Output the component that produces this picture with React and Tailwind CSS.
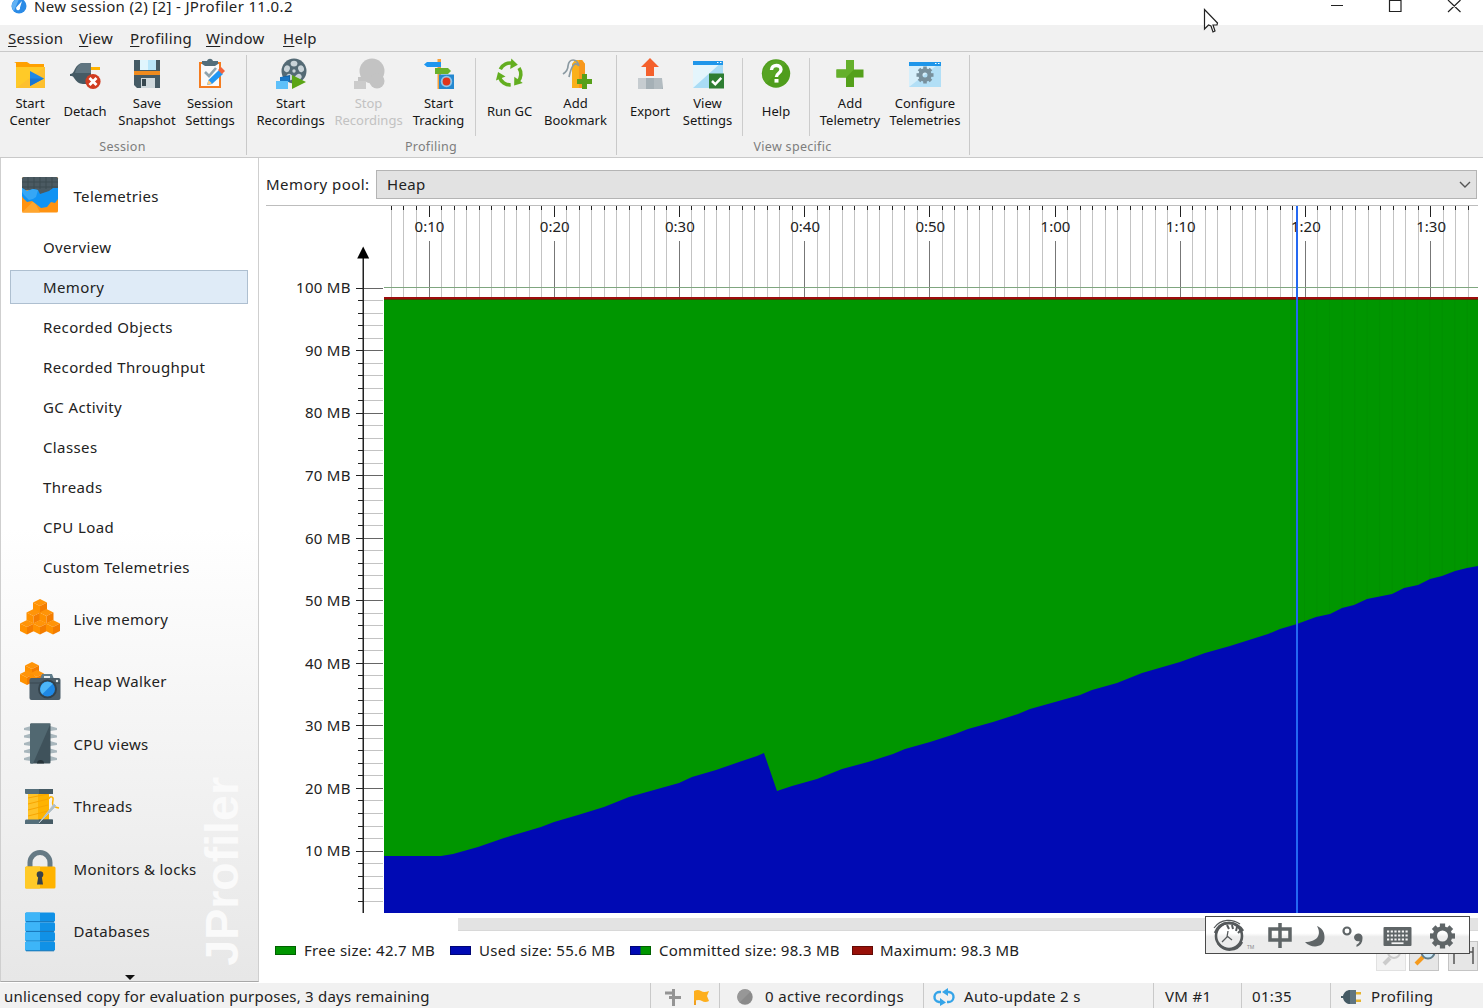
import React from "react";

/* ---------- small helpers ---------- */

function Gear({ cx, cy, r, teeth = 8, hole, fill }) {
  const w = r * 0.42;
  return (
    <g fill={fill}>
      {Array.from({ length: teeth }, (_, i) => (
        <rect
          key={i}
          x={cx - w / 2}
          y={cy - r}
          width={w}
          height={r * 0.5}
          transform={`rotate(${(i * 360) / teeth} ${cx} ${cy})`}
        />
      ))}
      <circle cx={cx} cy={cy} r={(r * 0.78 + hole) / 2} fill="none" stroke={fill} strokeWidth={r * 0.78 - hole} />
    </g>
  );
}

function Reel({ gray }) {
  const a = gray ? "#c3c3c3" : "#546a75";
  return (
    <g>
      <circle cx="19" cy="13" r="12.5" fill={a} />
      {gray ? null : (
        <g fill="#c9d3d8">
          {[0, 72, 144, 216, 288].map((d) => (
            <ellipse key={d} cx="19" cy="5.6" rx="3.4" ry="2.9" transform={`rotate(${d} 19 13)`} />
          ))}
          <circle cx="19" cy="13" r="1.7" />
        </g>
      )}
      {gray ? (
        <g fill="#c3c3c3">
          <path d="M5 19h8v4H5z" />
          <path d="M1 23h12v8H1z" fill="#cbcbcb" />
          <circle cx="24" cy="23" r="7.5" />
        </g>
      ) : (
        <g>
          <path d="M6 19l9 5v-7z" fill="#1565a9" />
          <path d="M5 19h9v5H5z" fill="#1976c4" />
          <path d="M1 23h12v8H1z" fill="#5ec0fa" />
          <path d="M17 17v14l14-7z" fill="#5ba516" />
        </g>
      )}
    </g>
  );
}

/* ---------- toolbar icons, 32 x 32 ---------- */

const icons = {
  folder: (
    <>
      <path d="M0 4h13l3 2h14v6H2V5z" fill="#ffa000" />
      <path d="M2 9h29v21H2z" fill="#ffca28" />
      <path d="M2 30L31 9v21z" fill="#fdc02f" />
      <path d="M16 13v15l14-7.5z" fill="#1e88e5" />
      <path d="M16 28v-7.5h14z" fill="#1976d2" />
    </>
  ),
  detach: (
    <>
      <path d="M1 16c2 0 3-1 4-3 2-5 5-8 9-8h8v21h-8c-4 0-7-3-9-6-1-2-2-2-4-2z" fill="#455a64" />
      <path d="M14 5h8v10H6c1-5 4-10 8-10z" fill="#607580" />
      <path d="M22 9h9v3h-9z" fill="#ffb300" />
      <circle cx="24" cy="23.5" r="7.6" fill="#d13c20" />
      <path d="M20.5 20l7 7m0-7l-7 7" stroke="#fff" strokeWidth="2.8" />
    </>
  ),
  save: (
    <>
      <path d="M3 2h26v28H6l-3-3z" fill="#455a64" />
      <path d="M9 2h16v10H9z" fill="#b9e6fa" />
      <path d="M9 2h8v10H9z" fill="#e0f5fd" />
      <path d="M3 13h26v4H3z" fill="#ef8b1f" />
      <path d="M10 20h14v10H10z" fill="#cfd8dc" />
      <path d="M11 21h4v7h-4z" fill="#37474f" />
    </>
  ),
  clipboard: (
    <>
      <path d="M5 4h22v26H5z" fill="#f47c20" />
      <path d="M7 6h18v22H7z" fill="#fafafa" />
      <path d="M8 6V3h5c1-3 5-3 6 0h5v3l-3 2H11z" fill="#546e7a" />
      <path d="M11 14l4 4 7-8" fill="none" stroke="#90a4ae" strokeWidth="2.6" />
      <path d="M13 27l1.500-5L25 12l4 4-11 10z" fill="#2196f3" />
      <path d="M24 12l3-3 4 4-3 3z" fill="#f4623a" />
      <path d="M13 27l1.500-5 3.500 3.500z" fill="#ffcc80" />
    </>
  ),
  reel: <Reel />,
  reelGray: <Reel gray />,
  tracking: (
    <>
      <path d="M14.500 1h3.500v30h-3.500z" fill="#f6a13a" />
      <path d="M1 6.500L4 4h14v5H4z" fill="#1e96f0" />
      <path d="M12 10h13l3 3-3 3H12z" fill="#6ab12b" />
      <path d="M16 16.500h15v14.500H16z" fill="#2488d0" />
      <circle cx="23.500" cy="23.500" r="5.700" fill="#8fc6ea" />
      <circle cx="23.500" cy="23.500" r="3.900" fill="#e0341b" />
    </>
  ),
  gc: (
    <g fill="none" stroke="#63ae20" strokeWidth="3.600">
      {[0, 120, 240].map((d) => (
        <g key={d} transform={`rotate(${d} 16 16)`}>
          <path d="M6.300 11.200A11 11 0 0 1 18.500 5.300" />
          <path d="M17.300 0.500l6.500 6.200-7.600 4.200z" fill="#63ae20" stroke="none" />
        </g>
      ))}
    </g>
  ),
  bookmark: (
    <>
      <path d="M12 6l3-4h7l3 4v24H12z" fill="#fbb01b" />
      <path d="M19 2h3l3 4v24h-6z" fill="#f8981d" />
      <path d="M19 8c-2-8-10-8-11 0 0 4-2 6-5 8M19 8c-5-6-8 2-10 11" fill="none" stroke="#8b9aa2" strokeWidth="1.700" />
      <path d="M22 16h5v5h5v5h-5v5h-5v-5h-5v-5h5z" fill="#56a01a" />
    </>
  ),
  exportIcon: (
    <>
      <path d="M16 0l9 9h-5v9h-8V9H7z" fill="#f4602c" />
      <path d="M4 20h24v11H4z" fill="#c6ccd0" />
      <path d="M12 20h16l1 11H12z" fill="#a5b0b6" />
      <path d="M20 20h8v11h-8z" fill="#b3bcc1" />
    </>
  ),
  viewSettings: (
    <>
      <path d="M1 3h30v27H1z" fill="#e4f5fc" />
      <path d="M31 3v27H1z" fill="#a9dcf5" />
      <path d="M1 3h30v4H1z" fill="#1e96ea" />
      <path d="M25 4.500h1.500M28 4.500h1.500" stroke="#fff" />
      <path d="M17 15.500h15v15H17z" fill="#2e7d32" />
      <path d="M20 23l3.300 3.300 6-6.500" fill="none" stroke="#fff" strokeWidth="2.500" />
    </>
  ),
  help: (
    <>
      <circle cx="16" cy="15.500" r="14.200" fill="#4f9d1c" />
      <path d="M6 25.500A14.200 14.200 0 0 1 26 5.500z" fill="#57a423" />
      <path d="M11.500 12c0-6 9.500-6 9.500-.5 0 4-4.600 3.500-4.600 7.500" fill="none" stroke="#fff" strokeWidth="3.400" />
      <path d="M14.500 21h4v3.600h-4z" fill="#fff" />
    </>
  ),
  plus: (
    <>
      <path d="M12 2h8v9.500h9.500v8H20V29h-8v-9.500H2.500v-8H12z" fill="#54a01b" />
      <path d="M12 2h8v9.500L12 19.500H2.500v-8H12z" fill="#65b02b" />
    </>
  ),
  configure: (
    <>
      <path d="M0 4h32v25H0z" fill="#d6effb" />
      <path d="M32 4v25H0z" fill="#b2dff6" />
      <path d="M0 4h32v4H0z" fill="#1e96ea" />
      <path d="M26 5.500h1.500M29 5.500h1.500" stroke="#fff" />
      <Gear cx={16} cy={17} r={8.500} hole={2.500} fill="#78909c" />
    </>
  ),
};

function Tool({ icon, lines, w, disabled }) {
  return (
    <div className={"flex h-[80px] shrink-0 flex-col items-center " + w + (disabled ? " text-[#c2c2c2]" : " text-[#161616]")}>
      <svg viewBox="0 0 32 32" className="h-[32px] w-[32px] shrink-0">
        {icons[icon]}
      </svg>
      <div className={"flex h-[48px] flex-col items-center whitespace-nowrap text-[13px] leading-[17px] " + (lines.length === 1 ? "pt-[13px]" : "pt-[5px]")}>
        {lines.map((l) => (
          <span key={l}>{l}</span>
        ))}
      </div>
    </div>
  );
}

function Group({ label, w, pad, children }) {
  return (
    <div className={"flex h-[100px] shrink-0 flex-col border-r border-[#c9c9c9] " + w}>
      <div className={"flex h-[84px] pt-[3px] " + pad}>{children}</div>
      <div className="pr-[1px] text-center text-[12.500px] leading-[16px] tracking-[0.3px] text-[#7d7d7d]">{label}</div>
    </div>
  );
}

const Sep = () => <div className="h-[78px] w-px shrink-0 bg-[#cccccc]" />;

function Toolbar() {
  return (
    <div className="flex h-[106px] shrink-0 border-b border-[#c9c9c9] bg-[#f1f1f1] pt-[3px]">
      <Group label="Session" w="w-[247px]" pad="pl-[2px]">
        <Tool icon="folder" w="w-[56px]" lines={["Start", "Center"]} />
        <Tool icon="detach" w="w-[54px]" lines={["Detach"]} />
        <Tool icon="save" w="w-[70px]" lines={["Save", "Snapshot"]} />
        <Tool icon="clipboard" w="w-[56px]" lines={["Session", "Settings"]} />
      </Group>
      <Group label="Profiling" w="w-[370px]" pad="pl-[4px]">
        <Tool icon="reel" w="w-[79px]" lines={["Start", "Recordings"]} />
        <Tool icon="reelGray" w="w-[77px]" lines={["Stop", "Recordings"]} disabled />
        <Tool icon="tracking" w="w-[63px]" lines={["Start", "Tracking"]} />
        <div className="w-[5px]" />
        <Sep />
        <Tool icon="gc" w="w-[67px]" lines={["Run GC"]} />
        <Tool icon="bookmark" w="w-[65px]" lines={["Add", "Bookmark"]} />
      </Group>
      <Group label="View specific" w="w-[353px]" pad="pl-[5px]">
        <Tool icon="exportIcon" w="w-[56px]" lines={["Export"]} />
        <Tool icon="viewSettings" w="w-[59px]" lines={["View", "Settings"]} />
        <div className="w-[5px]" />
        <Sep />
        <Tool icon="help" w="w-[66px]" lines={["Help"]} />
        <Sep />
        <Tool icon="plus" w="w-[80px]" lines={["Add", "Telemetry"]} />
        <Tool icon="configure" w="w-[70px]" lines={["Configure", "Telemetries"]} />
      </Group>
    </div>
  );
}

/* ---------- sidebar ---------- */

function Cube({ x, y }) {
  return (
    <g transform={`translate(${x} ${y})`}>
      <path d="M0 3.500L7 0l7 3.500-7 3.500z" fill="#ff9408" />
      <path d="M0 3.500l7 3.500v7.500L0 11z" fill="#ff9100" />
      <path d="M14 3.500L7 7v7.500l7-3.500z" fill="#f47d00" />
    </g>
  );
}

const sideIcons = {
  telemetries: (
    <>
      <rect x="2" y="2" width="36" height="35.500" rx="1.500" fill="#ff9312" />
      <path d="M2 37.500l12-12 6 12z" fill="#ffa62e" />
      <path d="M3.500 2h33q1.500 0 1.500 1.500V15H2V3.500Q2 2 3.500 2z" fill="#4b5a62" />
      <path d="M2 7h36M2 12h36M8 2v12M14 2v14M20 2v14M26 2v14M32 2v14" stroke="#3d4a51" strokeWidth="1" />
      <path d="M12 14h18v5H12z" fill="#4b5a62" />
      <path d="M2 13l5 3 6-2 5 1 2 4 6-2 3-1 4-3h5v11l-3 4-4-1-4 5-6 1-5-4-4-3-5 1-4-4-1-2z" fill="#1193f3" />
      <path d="M2 13l5 3 6-2 5 1-2 7-3 2-4 1-5-5-2-3z" fill="#36a7f5" />
    </>
  ),
  live: (
    <>
      <Cube x={13} y={1} />
      <Cube x={6.500} y={11} />
      <Cube x={19.500} y={11} />
      <Cube x={0} y={22} />
      <Cube x={13} y={22} />
      <Cube x={26} y={22} />
    </>
  ),
  heap: (
    <>
      <Cube x={5} y={1} />
      <Cube x={0} y={9.500} />
      <Cube x={10} y={9} />
      <path d="M20 18l2-5h10l2 5" fill="#607d8b" />
      <path d="M24 15h6v3h-6z" fill="#e8eef0" />
      <rect x="9.500" y="17" width="31" height="22" rx="2" fill="#4b5d68" />
      <path d="M10 22h30" stroke="#3a4850" />
      <circle cx="27.500" cy="28" r="9.500" fill="#33424b" />
      <circle cx="27.500" cy="28" r="7.500" fill="#1e88e5" />
      <path d="M22.200 33.300a7.500 7.500 0 0 1 10.600-10.600z" fill="#4db6f7" />
      <circle cx="37" cy="20" r="1.200" fill="#dfe7ea" />
    </>
  ),
  cpu: (
    <>
      {[5, 12.500, 20, 27.500, 35].map((y) => (
        <path key={y} d={`M4 ${y}l7-2v5l-7-1zM37 ${y}l-7-2v5l7-1z`} fill="#a9b7bd" />
      ))}
      <rect x="10" y="0.500" width="20.500" height="40" rx="1" fill="#3f525b" />
      <path d="M11 0.500h19.500L13 40.500h-2q-1 0-1-1V1.500z" fill="#516871" />
      <path d="M17 40.500a3.500 3.500 0 0 1 7 0z" fill="#27343a" />
    </>
  ),
  threads: (
    <>
      <path d="M8 5h21v29H8z" fill="#ffb300" />
      <path d="M8 5h10v29H8z" fill="#ffc328" />
      <path d="M8 12l20-4M8 18l20-5M8 24l20-5M8 30l20-5" stroke="#f9a500" strokeWidth="1" />
      <path d="M5 3h28v4q0 1-1 1H6q-1 0-1-1zM5 38h28v-3q0-1.500-1-1.500H6q-1 0-1 1.500z" fill="#546e7a" />
      <path d="M19 3h14v5H19zM19 33.500h14V38H19z" fill="#455a64" />
      <path d="M29 13c0-3 5-3 4 1-1 4-1 7 6 8" fill="none" stroke="#ffb300" strokeWidth="1.500" />
      <path d="M19 37l15-19 2 2z" fill="#b0bec5" stroke="#b8c5cb" />
    </>
  ),
  lock: (
    <>
      <path d="M10 20v-5.500a10 10 0 0 1 20 0V20" fill="none" stroke="#657a85" strokeWidth="5" />
      <rect x="5" y="18.500" width="30.500" height="22" rx="1.500" fill="#ffb300" />
      <path d="M6.500 18.500H20v22H6.500Q5 40.500 5 39V20q0-1.500 1.500-1.500z" fill="#ffca28" />
      <circle cx="20" cy="26.500" r="3.300" fill="#37414a" />
      <path d="M18.500 27h3l1.500 9.500h-6z" fill="#37414a" />
    </>
  ),
  db: (
    <>
      {[1.500, 11.200, 20.900, 30.600].map((y) => (
        <g key={y}>
          <rect x="5" y={y} width="30" height="9.200" rx="1.500" fill="#1091e6" />
          <path d={`M6.500 ${y}H20v9.200H6.500q-1.500 0-1.500-1.500v-6.200q0-1.500 1.500-1.500z`} fill="#3db5f8" />
          <path d={`M6 ${y + 9.200}h28`} stroke="#1172b6" strokeWidth="1" />
        </g>
      ))}
    </>
  ),
};

function Section({ icon, label }) {
  return (
    <div className="flex h-[62.500px] shrink-0 items-center gap-[12.500px] pl-[19px] text-[15px] text-[#222]">
      <svg viewBox="0 0 41 41" className="h-[41px] w-[41px]">
        {sideIcons[icon]}
      </svg>
      <span className="tracking-[0.33px] whitespace-nowrap">{label}</span>
    </div>
  );
}

const subItems = ["Overview", "Memory", "Recorded Objects", "Recorded Throughput", "GC Activity", "Classes", "Threads", "CPU Load", "Custom Telemetries"];

function Sidebar() {
  return (
    <div className="relative flex h-[824px] w-[259px] shrink-0 flex-col overflow-hidden border-r border-b border-l border-[#cfcfcf] border-b-[#a8a8a8] bg-linear-to-b from-white from-45% via-[#f2f2f2] via-75% to-[#e7e7e7]">
      <div className="absolute right-[12px] bottom-[15px] text-[46.500px] leading-[47px] font-bold text-[#fafafa] [writing-mode:vertical-rl] rotate-180 [font-family:'Liberation_Sans',sans-serif]">
        JProfiler
      </div>
      <div className="relative h-[69px] pt-[6.500px]">
        <Section icon="telemetries" label="Telemetries" />
      </div>
      <div className="relative flex flex-col">
        {subItems.map((s) => (
          <div key={s} className="flex h-[40px] items-center pl-[9px]">
            <div
              className={
                "flex h-[34px] w-[238px] items-center border pl-[32px] text-[15px] tracking-[0.38px] whitespace-nowrap text-[#222] " +
                (s === "Memory" ? "border-[#aebfd0] bg-[#dfebf7]" : "border-transparent")
              }
            >
              {s}
            </div>
          </div>
        ))}
      </div>
      <div className="relative flex flex-col pt-[0.500px]">
        <Section icon="live" label="Live memory" />
        <Section icon="heap" label="Heap Walker" />
        <Section icon="cpu" label="CPU views" />
        <Section icon="threads" label="Threads" />
        <Section icon="lock" label="Monitors & locks" />
        <Section icon="db" label="Databases" />
      </div>
      <div className="relative flex grow items-end justify-center">
        <svg viewBox="0 0 10 5" className="mb-[1px] h-[5px] w-[10px]">
          <path d="M0 0h10L5 5z" fill="#111" />
        </svg>
      </div>
    </div>
  );
}

/* ---------- telemetry chart ---------- */

const timeX = (s) => 429 + (s - 10) * 12.52;
const memY = (mb) => 913.6 - mb * 6.256;

const seconds = Array.from({ length: 87 }, (_, i) => i + 7).filter((s) => timeX(s) < 1478);
const megs = Array.from({ length: 50 }, (_, i) => (i + 1) * 2);

const usedPoints =
  "384,913 384,856 441,856 453,854 478,847 504,838 541,827 554,822 578,815 604,807 629,797 654,790 679,783 692,777 716,770 742,761 757,756 764,753 777,791 792,786 817,779 842,769 868,762 893,754 905,749 930,742 955,734 968,729 993,722 1018,714 1030,709 1055,702 1080,695 1092,690 1117,683 1142,673 1180,662 1205,653 1230,646 1268,634 1280,629 1297,624 1316,617 1330,614 1342,608 1354,605 1367,599 1392,594 1404,588 1418,585 1430,579 1442,576 1455,571 1467,568 1478,566 1478,913";

function Chart() {
  return (
    <svg viewBox="260 205 1223 710" className="block h-[710px] w-[1223px]" fontSize="15" fill="#222">
      <rect x="266" y="205" width="1212" height="1" fill="#bdbdbd" />
      <g shapeRendering="crispEdges">
        {seconds.map((s) => {
          const x = Math.floor(timeX(s)) + 0.5;
          const major = s % 10 === 0;
          return (
            <g key={s}>
              <path d={`M${x} ${major ? 241 : 210}V298`} stroke={major ? "#777" : "#c3c3c3"} />
              <path d={`M${x} 206V${major ? 217 : 210}`} stroke="#222" strokeWidth={major ? 1 : 1.5} />
            </g>
          );
        })}
        {megs.map((m) => {
          const y = Math.floor(memY(m)) + 0.5;
          const major = m % 10 === 0;
          return (
            <g key={m}>
              <path d={`M363 ${y}H383`} stroke={major ? "#666" : "#c3c3c3"} />
              <path d={`M${major ? 356 : 358} ${y}H363`} stroke="#222" />
            </g>
          );
        })}
        <path d="M384 287.500H1478" stroke="#7fa67f" />
        <rect x="384" y="297" width="1094" height="616" fill="#009600" />
        <rect x="384" y="297" width="1094" height="2" fill="#9c0c0c" />
        <rect x="384" y="299" width="1094" height="1" fill="#4a3c00" />
      </g>
      {Array.from({ length: 14 }, (_, i) => (
        <rect key={i} x={1304 + i * 12.52} y="300" width="1" height="612" fill="#008a00" opacity="0.35" />
      ))}
      <polygon points={usedPoints} fill="#000ab4" />
      <rect x="362.500" y="256" width="1.500" height="657" fill="#222" />
      <path d="M363.200 246.500l6 12h-12z" fill="#000" />
      <g textAnchor="middle">
        {[10, 20, 30, 40, 50, 60, 70, 80, 90].map((s) => (
          <text key={s} x={timeX(s) + 0.500} y="232">
            {Math.floor(s / 60) + ":" + String(s % 60).padStart(2, "0")}
          </text>
        ))}
      </g>
      <g textAnchor="end" letterSpacing="0.3">
        {[10, 20, 30, 40, 50, 60, 70, 80, 90, 100].map((m) => (
          <text key={m} x="350.800" y={memY(m) + 5.300}>
            {m + " MB"}
          </text>
        ))}
      </g>
      <rect x="1296" y="206" width="2" height="707" fill="#2468f2" />
    </svg>
  );
}

function Legend({ a, b, w, children }) {
  return (
    <div className={"flex shrink-0 items-center gap-[8px] " + w}>
      <svg viewBox="0 0 21 9" className="h-[9px] w-[21px] shrink-0">
        <rect width="21" height="9" fill={a} />
        <rect x="10.500" width="10.500" height="9" fill={b || a} />
        <rect x=".5" y=".5" width="20" height="8" fill="none" stroke="#000" strokeOpacity="0.350" />
      </svg>
      <span className="whitespace-nowrap">{children}</span>
    </div>
  );
}

function ZoomButton({ children, ml }) {
  return (
    <div className={"flex h-[30px] w-[30px] items-center justify-center border border-[#c4c4c4] bg-[#e6e6e6] " + ml}>
      <svg viewBox="0 0 28 28" className="h-[28px] w-[28px]">
        {children}
      </svg>
    </div>
  );
}

function ImeBar() {
  return (
    <div className="absolute top-[758px] left-[946px] flex h-[38px] w-[265px] items-center border border-[#4a4a4a] bg-linear-to-b from-white from-45% to-[#ececec] to-55%">
      <svg viewBox="0 0 263 36" className="h-[36px] w-[263px]">
        <g fill="none" stroke="#55595b">
          <circle cx="23" cy="19" r="13" strokeWidth="2.600" />
          <path d="M9 16C14 3 30 3 37 14M12 26c6 9 19 9 24-1" strokeWidth="2.500" />
          <path d="M8 11c7-10 19-9 26-4" strokeWidth="1.200" />
          <path d="M22 14l-1 6-5 5M21 19l5 4" strokeWidth="1.300" />
          <path d="M21 8l2 4m3-4l1 4m4-2l-1 4m5-1l-3 3" strokeWidth="2" />
        </g>
        <g fill="none" stroke="#5f6567" strokeWidth="3.500">
          <path d="M64 12h20v11H64zM74 6v25" />
        </g>
        <path d="M111 9c5 9 0 16-12 16 6 7 20 6 19.500-5 0-6-3-9-7.500-11z" fill="#5f6567" />
        <circle cx="141" cy="14" r="3.500" fill="none" stroke="#5f6567" strokeWidth="2.200" />
        <path d="M148 20a4.300 4.300 0 1 1 8.500 1.500c0 4-2 7-6 8.500v-2.300c2-1 3-2 3-3.700-3 1-5.500-1-5.500-4z" fill="#5f6567" />
        <rect x="177.500" y="10" width="28" height="19" rx="1" fill="#5f6567" />
        <path d="M181 14.500h21M181 18.500h21M181 22.500h21" stroke="#f3f3f3" strokeWidth="2" strokeDasharray="2.200 1.500" />
        <path d="M185.500 26.200h12" stroke="#f3f3f3" strokeWidth="1.800" />
        <Gear cx={236.500} cy={19} r={12.500} hole={5.500} fill="#5f6567" />
        <text x="41" y="32" fontSize="5" fill="#888">
          TM
        </text>
      </svg>
    </div>
  );
}

function MainPane() {
  return (
    <div className="relative flex h-[825px] w-[1224px] shrink-0 flex-col bg-white text-[15px] text-[#222]">
      <div className="flex h-[47px] items-start pt-[12px] pl-[7px]">
        <div className="w-[110px] pt-[2px] leading-[24px] tracking-[0.45px] whitespace-nowrap">Memory pool:</div>
        <div className="flex h-[29px] w-[1101px] items-center justify-between border border-[#b4b4b4] bg-[#e2e2e2] pr-[5px] pl-[10px]">
          <span className="tracking-[0.35px]">Heap</span>
          <svg viewBox="0 0 12 8" className="h-[8px] w-[12px]">
            <path d="M1 1l5 5 5-5" fill="none" stroke="#555" strokeWidth="1.400" />
          </svg>
        </div>
      </div>
      <div className="h-[710px] pl-[1px]">
        <Chart />
      </div>
      <div className="flex h-[16px] pt-[3px] pl-[199px]">
        <div className="h-[13px] w-[1020px] border-b border-[#d8d8d8] bg-[#e3e3e3]" />
      </div>
      <div className="flex h-[42px] items-start pl-[16px]">
        <div className="flex h-[39px] w-[1101px] items-center tracking-[0.28px]">
          <Legend a="#009600" w="w-[175px]">Free size: 42.7 MB</Legend>
          <Legend a="#000ab4" w="w-[180px]">Used size: 55.6 MB</Legend>
          <Legend a="#000ab4" b="#009600" w="w-[222px]">Committed size: 98.3 MB</Legend>
          <Legend a="#981008" w="w-[200px]"><span className="-ml-[1px] tracking-[0.2px]">Maximum: 98.3 MB</span></Legend>
        </div>
        <div className="flex pt-[10px]">
          <ZoomButton ml="opacity-50">
            <path d="M7 22l6-6" stroke="#999" strokeWidth="4" />
            <circle cx="17" cy="10" r="6" fill="none" stroke="#999" strokeWidth="2" />
          </ZoomButton>
          <ZoomButton ml="ml-[3px]">
            <path d="M6 22l7-7" stroke="#f59a1c" strokeWidth="4" />
            <circle cx="18" cy="10" r="6.500" fill="#cfeafa" stroke="#607d8b" strokeWidth="2" />
          </ZoomButton>
          <ZoomButton ml="ml-[9px]">
            <path d="M5 5v17M24 5v17M5 10h19" fill="none" stroke="#555" strokeWidth="1.500" />
          </ZoomButton>
        </div>
      </div>
      <ImeBar />
    </div>
  );
}

/* ---------- window chrome ---------- */

function TitleBar() {
  return (
    <div className="relative flex h-[25px] shrink-0 items-start bg-white">
      <svg viewBox="0 0 16 16" className="mt-[-2px] ml-[11px] h-[16px] w-[16px]">
        <circle cx="8" cy="8" r="7.500" fill="#2b8be6" />
        <path d="M8 1a7 7 0 0 0-5 12z" fill="#62b2f4" />
        <path d="M11 3L9 9.500a2 2 0 1 1-3-1z" fill="#fff" />
      </svg>
      <span className="mt-[-4px] ml-[7px] text-[15px] leading-[21px] tracking-[0.34px] whitespace-nowrap text-[#222]">New session (2) [2] - JProfiler 11.0.2</span>
      <div className="ml-auto flex w-[154px] pt-[0px]">
        <svg viewBox="1329 0 154 16" className="h-[16px] w-[154px]" fill="none" stroke="#222" strokeWidth="1.200">
          <path d="M1331 5.500h12M1389.500 1v10.500h11.500V0.500h-11.500zM1448 0l12.500 12M1460.500 0L1448 12" />
        </svg>
      </div>
      <svg viewBox="0 0 16 25" className="absolute top-[8px] left-[1203px] h-[25px] w-[16px]">
        <path d="M1.500 1.500v19.500l4-4 2.500 1 2 6 2-1-2-6h4l.5-2z" fill="#fff" stroke="#222" strokeWidth="1.200" />
      </svg>
    </div>
  );
}

function MenuBar() {
  const items = [
    ["Session", "w-[71px]"],
    ["View", "w-[51px]"],
    ["Profiling", "w-[76px]"],
    ["Window", "w-[77px]"],
    ["Help", "w-[60px]"],
  ];
  return (
    <div className="flex h-[27px] shrink-0 items-center border-b border-[#c9c9c9] bg-[#f1f1f1] pl-[8px] text-[15px] tracking-[0.3px] text-[#222]">
      {items.map(([t, w]) => (
        <div key={t} className={w + " whitespace-nowrap"}>
          <span className="underline underline-offset-2">{t[0]}</span>
          {t.slice(1)}
        </div>
      ))}
    </div>
  );
}

function StatusBar() {
  const cell = "flex h-[25px] shrink-0 items-center whitespace-nowrap ";
  return (
    <div className="flex h-[25px] shrink-0 items-center bg-[#f1f1f1] text-[15px] tracking-[0.33px] text-[#222]">
      <div className={cell + "w-[650px] pl-[4px] pt-[2px] tracking-[0.22px]"}>unlicensed copy for evaluation purposes, 3 days remaining</div>
      <div className={cell + "w-[69px] border-l border-[#c9c9c9] pl-[12px] pt-[3px]"}>
        <svg viewBox="0 0 48 18" className="h-[18px] w-[48px]">
          <path d="M2 5h9M6 9.500h12M10.500 1v17" fill="none" stroke="#949494" strokeWidth="3" />
          <path d="M31 3h2v14h-2z" fill="#f0a020" />
          <path d="M31 3q4-2 7 0t8 0l-2 5 2 5q-4 2-7 0t-8 0z" fill="#fdaf1e" />
        </svg>
      </div>
      <div className={cell + "w-[204px] gap-[12px] border-l border-[#c9c9c9] pl-[17px] pt-[2px]"}>
        <svg viewBox="0 0 16 16" className="h-[16px] w-[16px]">
          <circle cx="8" cy="8" r="7.700" fill="#8a8a8a" />
          <path d="M2.500 13.500a7.700 7.700 0 0 1 11-11z" fill="#979797" />
        </svg>
        <span>0 active recordings</span>
      </div>
      <div className={cell + "w-[230px] gap-[9px] border-l border-[#c9c9c9] pl-[9px] pt-[2px]"}>
        <svg viewBox="0 0 22 18" className="h-[18px] w-[22px]" fill="none" stroke="#35a4e8" strokeWidth="2.400">
          <path d="M8 4H7a5 5 0 0 0-1 10h2M14 14h1a5 5 0 0 0 1-10h-2" />
          <path d="M7 10l6 4.500L7 18zM15 0L9 4l6 4z" fill="#35a4e8" stroke="none" />
        </svg>
        <span>Auto-update 2 s</span>
      </div>
      <div className={cell + "w-[88px] border-l border-[#c9c9c9] pl-[11px] pt-[2px]"}>VM #1</div>
      <div className={cell + "w-[89px] border-l border-[#c9c9c9] pl-[10px] pt-[2px]"}>01:35</div>
      <div className={cell + "w-[153px] gap-[9px] border-l border-[#c9c9c9] pl-[10px] pt-[2px]"}>
        <svg viewBox="0 0 21 16" className="h-[16px] w-[21px]">
          <path d="M0 7h2c1-4 4-6 7-6h6v14H9c-3 0-6-2-7-6H0z" fill="#455a64" />
          <path d="M9 1v14h6V1z" fill="#607580" />
          <path d="M15 3h5v2.500h-5zM15 10.500h5V13h-5z" fill="#e6b32e" />
        </svg>
        <span>Profiling</span>
      </div>
    </div>
  );
}

export default function App() {
  return (
    <div className="flex h-[1008px] w-[1483px] flex-col overflow-hidden bg-white [font-family:'Noto_Sans','Open_Sans',sans-serif]">
      <TitleBar />
      <MenuBar />
      <Toolbar />
      <div className="flex h-[825px] shrink-0">
        <Sidebar />
        <MainPane />
      </div>
      <StatusBar />
    </div>
  );
}
